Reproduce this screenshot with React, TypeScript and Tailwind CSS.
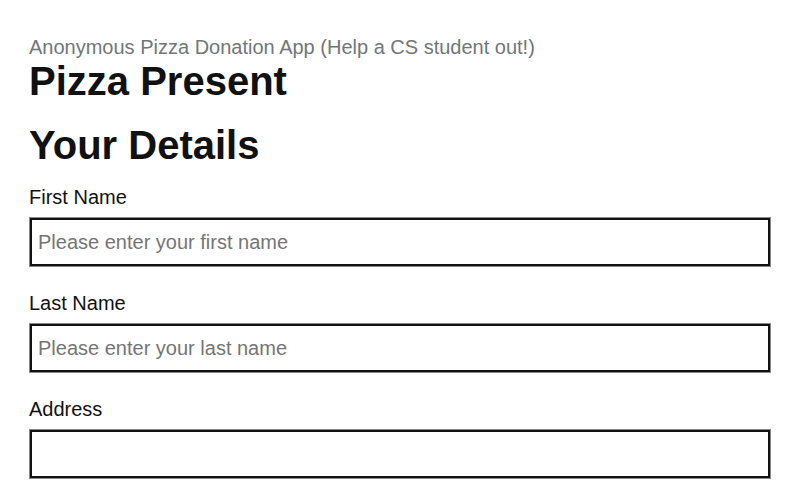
import React from 'react';

const fields = [
  { label: 'First Name', placeholder: 'Please enter your first name' },
  { label: 'Last Name', placeholder: 'Please enter your last name' },
  { label: 'Address', placeholder: '' },
];

export default function App() {
  return (
    <div className="min-h-screen bg-white px-[29px] pt-[36px] font-['Liberation_Sans',Arial,sans-serif] text-[#111]">
      <p className="text-[20px] leading-[22px] text-[#6f7779]">
        Anonymous Pizza Donation App (Help a CS student out!)
      </p>
      <h1 className="mt-[1px] text-[40px] font-bold leading-[44px]">Pizza Present</h1>

      <h2 className="mt-[20px] text-[40px] font-bold leading-[44px]">Your Details</h2>

      <form className="mt-[19px]">
        {fields.map((f) => (
          <div key={f.label} className="mb-[25px] flex flex-col">
            <label className="mb-[9px] text-[20px] leading-[22px]">{f.label}</label>
            <input
              type="text"
              placeholder={f.placeholder}
              className="m-[1px] h-[48px] border-2 border-[#111] px-[6px] text-[20px] shadow-[0_0_0_1px_#8a8a8a] outline-none placeholder:text-[#757575]"
            />
          </div>
        ))}
      </form>
    </div>
  );
}
